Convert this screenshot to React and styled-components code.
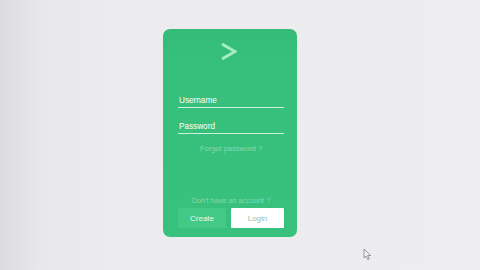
import React from "react";
import styled, { createGlobalStyle } from "styled-components";

const GlobalStyle = createGlobalStyle`
  html, body { margin: 0; padding: 0; }
  body {
    width: 480px;
    height: 270px;
    overflow: hidden;
    font-family: "Liberation Sans", Arial, sans-serif;
    background: linear-gradient(90deg, #dcdce0 0px, #e8e8eb 40px, #ececef 120px, #ededf0 100%);
  }
`;

const Page = styled.div`
  position: relative;
  height: 270px;
  padding: 29px 0 0 163px;
  box-sizing: border-box;
`;

const Card = styled.form`
  width: 134px;
  height: 208px;
  box-sizing: border-box;
  border-radius: 7px;
  background: linear-gradient(180deg, #35bd78 0px, #36c07b 40px, #37c17c 100%);
  padding: 0 13px 9px 15px;
  display: flex;
  flex-direction: column;
`;

const Logo = styled.div`
  display: flex;
  justify-content: center;
  padding: 13px 6px 0 0;
  height: 52px;
  box-sizing: border-box;
  margin-bottom: 14px;
`;

const Field = styled.label`
  display: block;
  color: #ffffff;
  font-size: 8.2px;
  line-height: 11px;
  padding: 0 0 1px 1px;
  border-bottom: 1px solid rgba(255, 255, 255, 0.75);
  margin-bottom: ${(p) => p.$gap}px;
`;

const Hint = styled.div`
  text-align: center;
  color: rgba(215, 242, 226, 0.5);
  font-size: ${(p) => p.$size}px;
  line-height: 8px;
`;

const Spacer = styled.div`
  flex: 1;
`;

const Buttons = styled.div`
  display: flex;
  gap: 5px;
  margin-top: 3px;
`;

const Button = styled.button`
  width: ${(p) => p.$w}px;
  height: 20px;
  border: none;
  border-radius: 1px;
  font-family: inherit;
  font-size: 8px;
  padding: 0;
  background: ${(p) => (p.$primary ? "#ffffff" : "#44c886")};
  color: ${(p) => (p.$primary ? "#9cbcad" : "#eafaf0")};
`;

const Cursor = styled.svg`
  position: absolute;
  left: 363px;
  top: 248px;
`;

export default function App() {
  return (
    <>
      <GlobalStyle />
      <Page>
        <Card onSubmit={(e) => e.preventDefault()}>
          <Logo>
            <svg width="17" height="19" viewBox="0 0 17 19">
              <polyline
                points="2,2 15,9.5 2,17"
                fill="none"
                stroke="#a3eec2"
                strokeWidth="3"
                strokeLinejoin="miter"
              />
            </svg>
          </Logo>
          <Field $gap={13}>Username</Field>
          <Field $gap={11}>Password</Field>
          <Hint $size={7.5}>Forgot password ?</Hint>
          <Spacer />
          <Hint $size={7.3}>Don't have an account ?</Hint>
          <Buttons>
            <Button type="button" $w={48}>Create</Button>
            <Button type="submit" $primary $w={53}>Login</Button>
          </Buttons>
        </Card>
        <Cursor width="9" height="13" viewBox="0 0 9 13">
          <path
            d="M1 1 L1 10 L3.2 8 L4.8 11.6 L6.2 11 L4.7 7.5 L7.6 7.5 Z"
            fill="#f4f4f6"
            stroke="#8a8a90"
            strokeWidth="0.9"
            strokeLinejoin="round"
          />
        </Cursor>
      </Page>
    </>
  );
}
